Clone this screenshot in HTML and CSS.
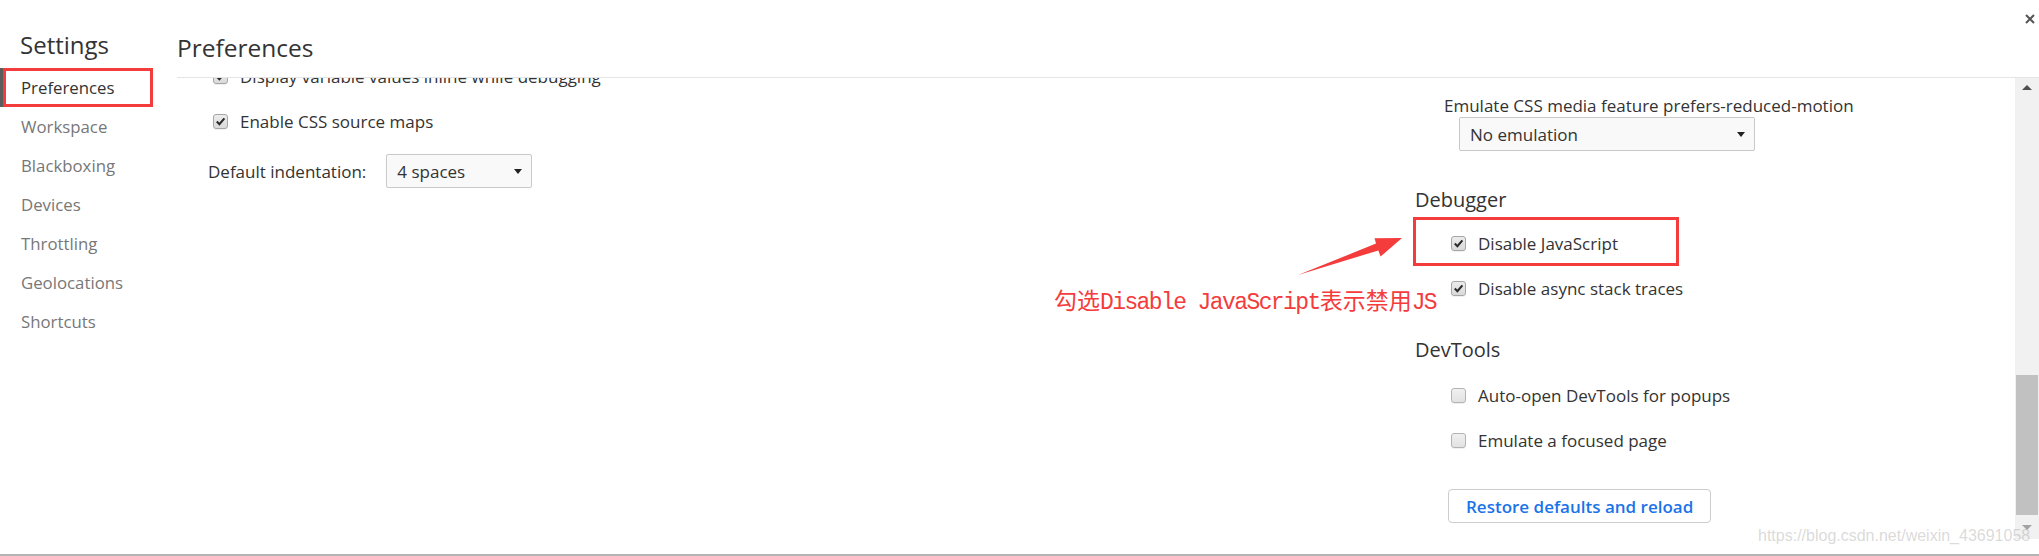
FILE: index.html
```html
<!DOCTYPE html>
<html lang="en">
<head>
<meta charset="utf-8">
<title>Settings - Preferences</title>
<link rel="stylesheet" href="styles.css">
</head>
<body>
<div class="app">
  <aside class="sidebar">
    <h1 class="sidebar-title">Settings</h1>
    <nav class="nav">
      <div class="nav-item selected">Preferences</div>
      <div class="nav-item">Workspace</div>
      <div class="nav-item">Blackboxing</div>
      <div class="nav-item">Devices</div>
      <div class="nav-item">Throttling</div>
      <div class="nav-item">Geolocations</div>
      <div class="nav-item">Shortcuts</div>
    </nav>
  </aside>
  <main class="main">
    <header class="main-header">
      <h2 class="main-title">Preferences</h2>
      <button class="close" aria-label="Close">
        <svg width="10" height="10" viewBox="0 0 10 10"><path d="M1 1 L9 9 M9 1 L1 9" stroke="#555" stroke-width="2" fill="none"/></svg>
      </button>
    </header>
    <div class="content">
      <div class="scroll-area">
        <div class="col col-left">
          <label class="check-row first-row"><span class="cb checked"><svg width="11" height="11" viewBox="0 0 11 11"><path d="M1.8 5.6 L4.4 8.2 L9.4 2.4" stroke="#2b2b2b" stroke-width="2.1" fill="none"/></svg></span><span>Display variable values inline while debugging</span></label>
          <label class="check-row"><span class="cb checked"><svg width="11" height="11" viewBox="0 0 11 11"><path d="M1.8 5.6 L4.4 8.2 L9.4 2.4" stroke="#2b2b2b" stroke-width="2.1" fill="none"/></svg></span><span>Enable CSS source maps</span></label>
          <div class="select-row">
            <span class="field-text">Default indentation:</span>
            <div class="select select-small"><span>4 spaces</span><span class="caret"></span></div>
          </div>
        </div>
        <div class="col col-right">
          <div class="field-label">Emulate CSS media feature prefers-reduced-motion</div>
          <div class="select-wrap"><div class="select select-wide"><span>No emulation</span><span class="caret"></span></div></div>

          <h3 class="section-title debugger-title">Debugger</h3>
          <label class="check-row"><span class="cb checked"><svg width="11" height="11" viewBox="0 0 11 11"><path d="M1.8 5.6 L4.4 8.2 L9.4 2.4" stroke="#2b2b2b" stroke-width="2.1" fill="none"/></svg></span><span>Disable JavaScript</span></label>
          <label class="check-row"><span class="cb checked"><svg width="11" height="11" viewBox="0 0 11 11"><path d="M1.8 5.6 L4.4 8.2 L9.4 2.4" stroke="#2b2b2b" stroke-width="2.1" fill="none"/></svg></span><span>Disable async stack traces</span></label>

          <h3 class="section-title devtools-title">DevTools</h3>
          <label class="check-row"><span class="cb"></span><span>Auto-open DevTools for popups</span></label>
          <label class="check-row"><span class="cb"></span><span>Emulate a focused page</span></label>

          <div class="button-row"><button class="btn">Restore defaults and reload</button></div>
        </div>
      </div>
      <div class="scrollbar">
        <div class="sb-btn"><span class="sb-up"></span></div>
        <div class="sb-track"><div class="sb-thumb"></div></div>
        <div class="sb-btn sb-btn-down"><span class="sb-down"></span></div>
      </div>
    </div>
  </main>

  <div class="mark mark-nav"></div>
  <div class="mark mark-js"></div>
  <svg class="arrow" width="2039" height="556" viewBox="0 0 2039 556">
    <polygon points="1298,275 1376,243.6 1374.5,238.2 1402,238 1380.5,256.6 1378.4,250.4" fill="#f43c3c"/>
  </svg>
  <div class="note">勾选<span class="lat">Disable JavaScript</span>表示禁用<span class="lat">JS</span></div>
  <div class="watermark">https://blog.csdn.net/weixin_43691058</div>
</div>
</body>
</html>
```
FILE: styles.css
```css
* { box-sizing: border-box; }
html, body { margin: 0; padding: 0; }
body {
  width: 2039px;
  height: 556px;
  overflow: hidden;
  background: #fff;
  font-family: "Open Sans", "Noto Sans", sans-serif;
  color: #333;
}
.app {
  position: relative;
  display: flex;
  height: 556px;
  border-bottom: 2px solid #b4b4b4;
}

/* sidebar */
.sidebar { width: 177px; flex: none; padding-top: 29px; }
.sidebar-title {
  margin: 0 0 7px 20px;
  font-size: 24px;
  line-height: 32px;
  font-weight: 400;
  color: #333;
}
.nav-item {
  height: 39px;
  line-height: 39px;
  padding-left: 18px;
  border-left: 3px solid transparent;
  font-size: 16.8px;
  color: #777;
}
.nav-item.selected { border-left-color: #5c5c5c; color: #333; }

/* main */
.main { flex: 1; min-width: 0; display: flex; flex-direction: column; }
.main-header { height: 77px; display: flex; align-items: flex-start; }
.main-title {
  margin: 32px 0 0 0;
  font-size: 24.5px;
  line-height: 32px;
  font-weight: 400;
  color: #333;
}
.close {
  margin: 14px 4px 0 auto;
  padding: 0;
  border: 0;
  background: none;
  width: 10px;
  height: 10px;
  display: flex;
}
.content { height: 462px; border-top: 1px solid #e4e4e4; display: flex; }
.scroll-area {
  flex: 1;
  min-width: 0;
  overflow: hidden;
  display: grid;
  grid-template-columns: 1238px 1fr;
  align-items: start;
}

.check-row {
  display: flex;
  align-items: center;
  gap: 12px;
  height: 45px;
  padding-left: 36px;
  font-size: 17px;
  line-height: 23px;
  color: #333;
}
.first-row { margin-top: -24px; }
.cb {
  width: 15px;
  height: 15px;
  flex: none;
  border: 1px solid #a6a6a6;
  border-radius: 3px;
  background: linear-gradient(#ececec, #dadada);
  box-shadow: 0 1px 0 rgba(0,0,0,0.06);
  display: flex;
  align-items: center;
  justify-content: center;
  margin-top: -1px;
}
.cb:not(.checked) { border-color: #b3b3b3; background: linear-gradient(#f0f0f0, #e2e2e2); }

.select-row {
  display: flex;
  align-items: center;
  gap: 20px;
  margin-top: 10px;
  padding-left: 31px;
  font-size: 17px;
}
.select {
  display: flex;
  align-items: center;
  justify-content: space-between;
  height: 34px;
  padding: 0 9px 0 10px;
  border: 1px solid #c9c9c9;
  border-radius: 2px;
  background: #f9f9f9;
  font-size: 17px;
  color: #333;
}
.select-small { width: 146px; }
.select-wide { width: 296px; }
.caret {
  width: 0;
  height: 0;
  border-left: 4px solid transparent;
  border-right: 4px solid transparent;
  border-top: 5px solid #222;
}

.col-right { padding-top: 16px; }
.field-label { padding-left: 29px; font-size: 17px; line-height: 23px; }
.select-wrap { padding-left: 44px; }
.section-title {
  margin: 0 0 8px 0;
  font-size: 20px;
  line-height: 27px;
  font-weight: 400;
  color: #333;
}
.debugger-title { margin-top: 35px; }
.devtools-title { margin-top: 25px; margin-bottom: 10px; }
.button-row { padding-left: 33px; margin-top: 26px; }
.btn {
  height: 34px;
  padding: 0 17px;
  border: 1px solid #cdcdcd;
  border-radius: 4px;
  background: #fff;
  color: #1a73e8;
  font-family: inherit;
  font-size: 17px;
  font-weight: 600;
}

/* scrollbar */
.scrollbar { width: 24px; flex: none; background: #f1f1f1; display: flex; flex-direction: column; }
.sb-btn { height: 18px; display: flex; align-items: center; justify-content: center; flex: none; }
.sb-btn-down { height: 24px; }
.sb-track { flex: 1; display: flex; flex-direction: column; justify-content: flex-end; }
.sb-thumb { height: 140px; margin: 0 1px 0 1px; background: #c1c1c1; }
.sb-up {
  width: 0; height: 0;
  border-left: 5px solid transparent;
  border-right: 5px solid transparent;
  border-bottom: 5px solid #505050;
}
.sb-down {
  width: 0; height: 0;
  border-left: 5px solid transparent;
  border-right: 5px solid transparent;
  border-top: 5px solid #a3a3a3;
}

/* annotations over the screenshot */
.mark { position: absolute; border: 3px solid #f43c3c; pointer-events: none; }
.mark-nav { left: 3px; top: 68px; width: 150px; height: 39px; }
.mark-js { left: 1413px; top: 217px; width: 266px; height: 49px; }
.arrow { position: absolute; left: 0; top: 0; pointer-events: none; }
.note {
  position: absolute;
  left: 1054px;
  top: 292px;
  font-family: "Liberation Mono", "Noto Sans CJK SC", monospace;
  font-size: 23px;
  line-height: 23px;
  color: #f43c3c;
  white-space: nowrap;
}
.note .lat { letter-spacing: -1.6px; }
.watermark {
  position: absolute;
  left: 1758px;
  top: 527px;
  font-family: "Liberation Sans", Arial, sans-serif;
  font-size: 16px;
  line-height: 18px;
  color: rgba(160,160,160,0.4);
  white-space: nowrap;
}
```
